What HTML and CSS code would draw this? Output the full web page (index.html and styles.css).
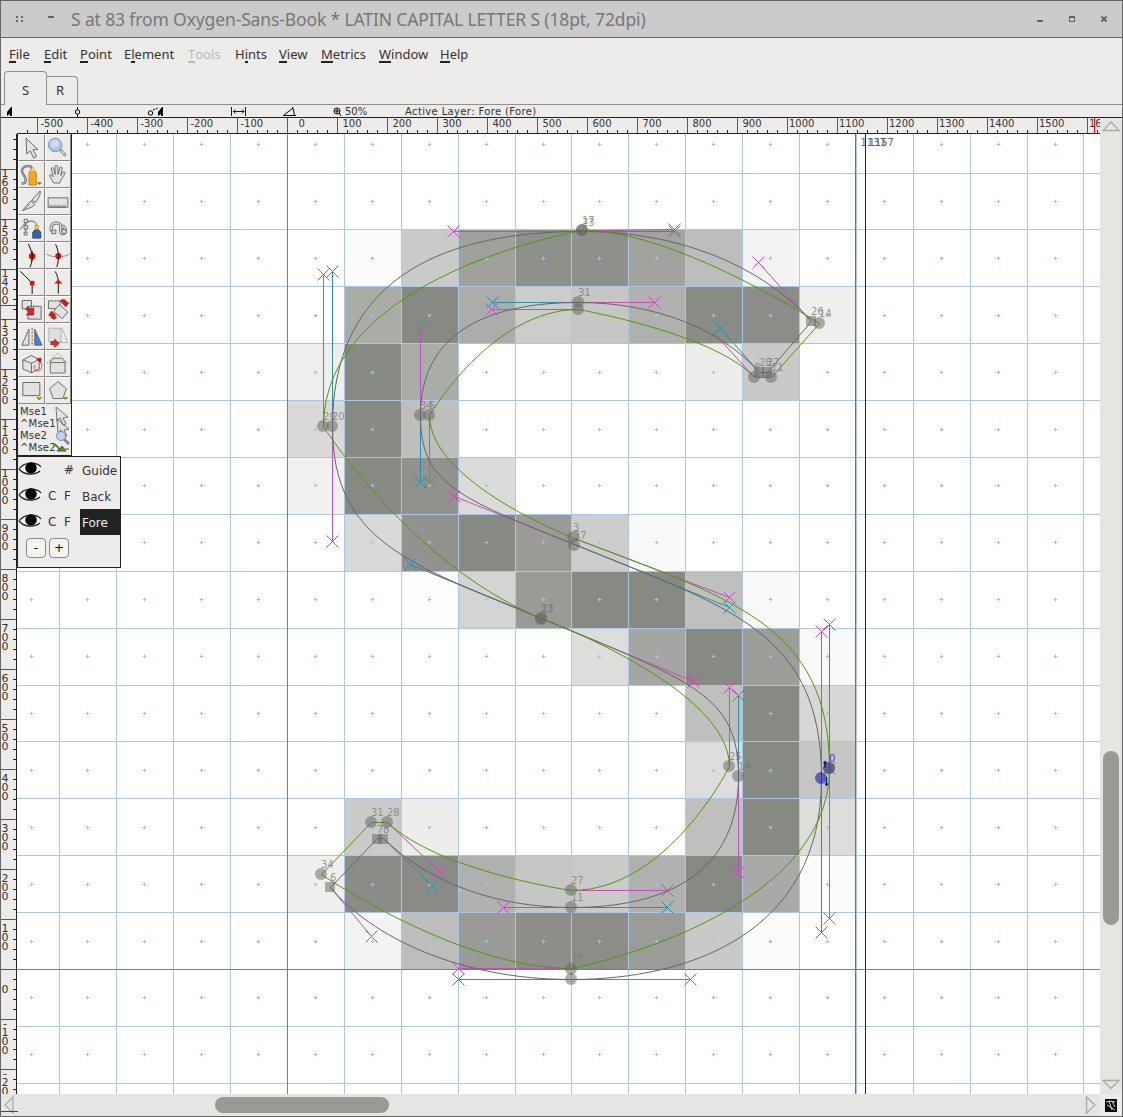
FILE: index.html
```html
<!DOCTYPE html>
<html lang="en">
<head>
<meta charset="utf-8">
<title>S at 83 from Oxygen-Sans-Book</title>
<link rel="stylesheet" href="styles.css">
</head>
<body>
<div class="window">
  <header class="titlebar">
    <svg class="wm-left" viewBox="0 0 60 36"><path d="M15 15h2v2h-2zM20 15h2v2h-2zM15 19h2v2h-2zM20 19h2v2h-2zM47 15h6v2h-6z"/></svg>
    <h1>S at 83 from Oxygen-Sans-Book * LATIN CAPITAL LETTER S (18pt, 72dpi)</h1>
    <svg class="wm-right" viewBox="1022 1 100 36"><path d="M1037 20h6v2h-6zM1069 16h6v6h-6zM1070 18v3h4v-3z" fill-rule="evenodd"/><path d="M1101.500 16.500l5 5M1106.500 16.500l-5 5" class="cross"/></svg>
  </header>
  <nav class="menubar">
    <span class="w35"><u>F</u>ile</span><span class="w36"><u>E</u>dit</span><span class="w44"><u>P</u>oint</span><span class="w64">E<u>l</u>ement</span><span class="w47 off"><u>T</u>ools</span><span class="w44">H<u>i</u>nts</span><span class="w42"><u>V</u>iew</span><span class="w58"><u>M</u>etrics</span><span class="w61"><u>W</u>indow</span><span><u>H</u>elp</span>
  </nav>
  <div class="tabs"><span class="tab active">S</span><span class="tab">R</span></div>
  <div class="infobar">
    <svg viewBox="1 105 343 12">
      <path d="M12 107v9h-2v-2l-3 2v-4l4-5z" fill="#000"/>
      <g fill="none" stroke="#000"><circle cx="77.500" cy="112" r="2.200"/><path d="M77.500 107v3M77.500 114v3"/><circle cx="150.500" cy="113" r="2.200"/><path d="M153 110l5-2" stroke-dasharray="2 1"/><path d="M231.500 107v9M245.500 107v9M233 111.500h11M235.500 109.500l-2 2 2 2M242 109.500l2 2-2 2" stroke-width=".9"/><path d="M283 115.500h13M284 115l9-7M292.500 107l1 3 1 6"/><circle cx="337" cy="111" r="3"/><path d="M335 111h4M337 109v4M339 113l2 3"/></g>
      <path d="M163 107v9h-2v-2l-3 2v-4l4-5z" fill="#000"/>
    </svg>
    <span class="zoomlevel">50%</span><span>Active Layer: Fore (Fore)</span>
  </div>
  <main class="work">
    <svg class="hruler" id="hruler" viewBox="1 118 1099 16"></svg>
    <svg class="vruler" id="vruler" viewBox="1 134 16 960"></svg>
    <section class="canvas">
      <svg class="glyph" viewBox="17 134 1083 960">
        <g id="cells"></g><g id="grid"></g>
        <g id="handles" class="handles"></g>
        <path class="back" d="M821.500 778.500C821.500 932.500 690.500 979.500 571.500 979.500C458.500 979.500 371.500 936.500 330.500 887.500L377.500 838.500L383.500 838.500C432.500 886.500 503.500 907.500 571.500 907.500C667.500 907.500 738.500 872.500 738.500 776.500C738.500 695.500 693.500 681.500 541.500 618.500C410.500 564.500 332.500 541.500 332.500 426.500C332.500 271.500 453.500 231.500 582.500 231.500C674.500 231.500 758.500 262.500 811.500 321.500L767.500 372.500L759.500 372.500C720.500 328.500 654.500 302.500 578.500 302.500C492.500 302.500 420.500 329.500 420.500 415.500C420.500 482.500 454.500 496.500 574.500 544.500C729.500 607.500 821.500 631.500 821.500 778.500Z"/>
        <path class="fore" d="M829.500 768.500C829.500 918.500 571.500 968.500 571.500 968.500C458.500 968.500 321.500 874.500 321.500 874.500L371.500 822.500L387.500 822.500C439.500 871.500 571.500 890.500 571.500 890.500C667.500 890.500 729.500 766.500 729.500 766.500C729.500 687.500 541.500 618.500 541.500 618.500C410.500 564.500 323.500 426.500 323.500 426.500C323.500 274.500 582.500 230.500 582.500 230.500C674.500 229.500 819.500 323.500 819.500 323.500L771.500 377.500L754.500 377.500C714.500 333.500 578.500 309.500 578.500 309.500C491.500 309.500 429.500 415.500 429.500 415.500C429.500 482.500 574.500 538.500 574.500 538.500C729.500 597.500 829.500 624.500 829.500 768.500Z"/>
        <g id="points" class="points"></g>
        <path d="M855.500 134V1094" stroke="#4e9a06"/><path d="M865.500 134V1094" stroke="#222"/>
        <path d="M825 761v7M823.500 763.500l1.500-2 1.500 2M826.500 777v9M825 783.500l1.500 2 1.500-2" stroke="#0000b4" fill="none" stroke-width="1.200"/>
        <text x="860.500" y="146" class="width">1137</text><text x="868.500" y="146" class="width">1157</text>
      </svg>
      <aside class="toolbox">
        <div class="tools">
          <svg viewBox="0 0 78 78"><path class="w" d="M22 10l37 35-15 1 11 21-9 5-11-22-11 9z"/></svg>
          <svg viewBox="0 0 78 78"><path d="M44 44l17 18" stroke="#888" stroke-width="10" stroke-linecap="round"/><path d="M49 50l12 12" stroke="#ddd" stroke-width="5"/><circle cx="30" cy="31" r="22" fill="#a5c7ec" stroke="#7b8faa" stroke-width="3"/><circle cx="28" cy="27" r="14" fill="#c7ddf5"/></svg>
          <svg viewBox="0 0 78 78"><path d="M8 66C24 70 25 54 13 38C3 22 16 12 28 13C42 11 42 22 36 30" fill="none" stroke="#555" stroke-width="7"/><path d="M8 66C24 70 25 54 13 38C3 22 16 12 28 13C42 11 42 22 36 30" fill="none" stroke="#ccc" stroke-width="3"/><path d="M31 72V34l11-18 12 18v38z" fill="#f8a51b" stroke="#a56400" stroke-width="2"/><path d="M35 28l7-12 7 12z" fill="#f3d7a0"/><path d="M55 63h17l-8 9z" fill="#4e9a06"/></svg>
          <svg viewBox="0 0 78 78"><path class="w" d="M24 66C19 56 13 48 12 41c4-4 8 1 11 5L17 19c5-4 8-1 9 4l4 16-1-27c4-5 9-3 9 2l1 24 6-22c5-4 9 0 7 5l-4 21 9-12c6-1 6 3 4 7L50 55l-6 12z"/></svg>
          <svg viewBox="0 0 78 78"><path class="w" d="M39 36L66 6c2 9-4 21-13 35zM36 38l14 10-11 9-28 10z"/><path d="M11 67l23-20" stroke="#777" stroke-width="2"/></svg>
          <svg viewBox="0 0 78 78"><path class="w" d="M7 27h64v31H7z"/><path d="M13 58v-9M18 58v-6M23 58v-6M28 58v-9M33 58v-6M38 58v-6M43 58v-9M48 58v-6M53 58v-6M58 58v-9M63 58v-6" stroke="#444" stroke-width="2"/></svg>
          <svg viewBox="0 0 78 78"><path d="M5 42C12 25 31 11 46 17C55 21 54 27 53 33M21 14v34" fill="none" stroke="#555" stroke-width="3"/><path class="w" d="M16 10h11v11H16zM16 30h11v11H16zM16 50h9v9h-9z"/><path d="M50 30h10v15H50z" fill="#ffd31c" stroke="#aa8500" stroke-width="2"/><path d="M43 69V50l7-6h11l7 6v19z" fill="#3465a4" stroke="#204a87" stroke-width="3"/></svg>
          <svg viewBox="0 0 78 78"><path d="M27 51C9 45 16 20 34 21C59 21 40 48 51 55C68 60 65 30 52 31" fill="none" stroke="#666" stroke-width="10"/><path d="M27 51C9 45 16 20 34 21C59 21 40 48 51 55C68 60 65 30 52 31" fill="none" stroke="#ddd" stroke-width="5"/><path class="w" d="M19 44h13v12H19zM52 42h13v13H52z"/></svg>
          <svg viewBox="0 0 78 78"><path d="M29 3C44 30 43 57 34 76" class="k"/><circle cx="41" cy="41" r="10" fill="red"/><path d="M41 25v32" class="k"/></svg>
          <svg viewBox="0 0 78 78"><path d="M2 34C16 47 61 46 76 34" class="k thin"/><circle cx="40" cy="41" r="10" fill="red"/><path d="M31 3C43 25 43 54 35 76" class="k"/></svg>
          <svg viewBox="0 0 78 78"><path d="M4 4l37 37v34" class="k"/><path d="M34 34h14v14H34z" fill="red"/></svg>
          <svg viewBox="0 0 78 78"><path d="M30 3C38 16 40 30 40 40v35" class="k"/><path d="M40 29l13 13H27z" fill="red"/></svg>
          <svg viewBox="0 0 78 78"><path class="w" d="M10 11h29v26H10zM28 29h41v40H28z"/><path d="M27 30l12 9 7-6v23H23l8-8-10-10z" fill="#cc3030" stroke="#8b0000" stroke-width="2"/></svg>
          <svg viewBox="0 0 78 78"><path class="w" d="M8 11h38v25H8z"/><path class="w" d="M43 23l28 24-18 22-28-24z"/><path d="M47 9c9-6 20-2 22 8h6L64 31 52 17h6c-2-3-6-2-9-1zM14 58H8l10-14 15 14h-7c1 4 5 5 9 5l-7 8c-7 0-13-5-14-13z" fill="#cc2020" stroke="#800" stroke-width="1.500"/></svg>
          <svg viewBox="0 0 78 78"><path class="w" d="M9 66L31 16v50z"/><path d="M41 12v57" stroke="#d36a16" stroke-width="4" stroke-dasharray="7 4"/><path d="M49 16v50h23z" fill="#4d82bd" stroke="#204a87" stroke-width="2"/></svg>
          <svg viewBox="0 0 78 78"><path d="M19 14h34l17 45H35z" fill="#eee" stroke="#aaa" stroke-width="3"/><path d="M9 12h40v44H9z" fill="#dfe0dd" stroke="#999" stroke-width="2"/><path d="M16 56h12v-8l15 14-15 12v-8H16z" fill="#e52a2a" stroke="#800" stroke-width="2"/></svg>
          <svg viewBox="0 0 78 78"><path class="w" d="M12 28l26-14 25 12v30L39 68 12 56zM12 28l27 10 24-12M39 38v30"/><path d="M52 60c12 8 22-4 18-20l-10-13M50 45c-4 6-2 12 2 16" fill="none" stroke="#c11" stroke-width="3" stroke-dasharray="4 2"/><path d="M53 24l17-3-2 17z" fill="#d01010"/></svg>
          <svg viewBox="0 0 78 78"><path class="w" d="M14 34l9-12h28l11 12v36H14zM14 36h48"/><path d="M3 38L38 5l35 33" fill="none" stroke="#57a80c" stroke-width="3" stroke-dasharray="4 4"/></svg>
          <svg viewBox="0 0 78 78"><path class="w" d="M12 14h53v41H12z"/><path d="M53 60h20l-10 10z" fill="#5aac0c"/></svg>
          <svg viewBox="0 0 78 78"><path class="w" d="M39 10l27 23-11 32H23L12 33z"/><path d="M53 60h20l-10 10z" fill="#5aac0c"/></svg>
        </div>
        <div class="mouse">
          <div>Mse1</div><div>^Mse1</div><div>Mse2</div><div>^Mse2</div>
          <svg viewBox="54 406 16 48"><path class="w s" d="M56 407l12 10-5 1 3 6-3 1-3-7-3 3zM57 419l12 10-5 1 3 6-3 1-3-7-3 3z"/><path d="M64 439l5 5" stroke="#888" stroke-width="3"/><circle cx="61" cy="436" r="4.500" fill="#b8d3f0" stroke="#7b8faa"/><path d="M53 444c4-1 5 4 8 7M57 451l5-5 4 5zM65 449h4" fill="#4e9a06" stroke="#555"/></svg>
        </div>
      </aside>
      <aside class="layers">
        <div class="layer"><svg viewBox="0 0 24 16"><use href="#eye"/></svg><span></span><span>#</span><b>Guide</b></div>
        <div class="layer"><svg viewBox="0 0 24 16"><use href="#eye"/></svg><span>C</span><span>F</span><b>Back</b></div>
        <div class="layer"><svg viewBox="0 0 24 16"><g id="eye"><path d="M1 8C6 1 18 0 23 7C18 14 7 15 1 8z" fill="#fff"/><path d="M1 8C6 1 18 0 23 6M1 8C7 15 17 14 22 10" fill="none" stroke="#222" stroke-width="1.200"/><circle cx="13" cy="7" r="5.800"/></g></svg><span>C</span><span>F</span><b class="sel">Fore</b></div>
        <div class="buttons"><button>-</button><button>+</button></div>
      </aside>
    </section>
    <div class="vscroll"><svg viewBox="0 0 22 16"><path d="M11 4l8 8.500H3z"/></svg><i></i><svg viewBox="0 0 22 16"><path d="M11 12.500L3 4.500h16z"/></svg></div>
    <div class="hscroll"><svg viewBox="0 0 14 22"><path d="M4 11l8-8v16z"/></svg><i></i><svg viewBox="0 0 14 22"><path d="M10 11L1.500 3v16z"/></svg></div>
    <svg class="corner" viewBox="0 0 22 22"><path d="M5 5h12v13H5z" fill="#000"/><path d="M6 8l4-1 5 1M9 7l3 9M7 11l8 5M12 7l3 6" stroke="#ddd" fill="none"/></svg>
    <i class="mark"></i>
  </main>
</div>
<script src="editor.js"></script>
</body>
</html>
```
FILE: styles.css
```css
* { box-sizing: border-box; }
body { margin: 0; font-family: "Noto Sans", "DejaVu Sans", sans-serif; color: #333; }
svg { display: block; }
.window { width: 1123px; height: 1117px; border: 1px solid #666; background: #edeceb; display: flex; flex-direction: column; overflow: hidden; }
.titlebar { height: 37px; flex: none; background: #cbcbcb; border-bottom: 1px solid #666; display: flex; align-items: center; color: #777; }
.titlebar h1 { margin: 0 0 0 10px; flex: 1; font-size: 17.5px; font-weight: 400; line-height: 36px; white-space: nowrap; letter-spacing: -0.13px; }
.wm-left { width: 60px; height: 36px; fill: #666; }
.wm-right { width: 100px; height: 36px; fill: #666; }
.cross { stroke: #666; stroke-width: 2.2; }
.menubar { height: 33px; flex: none; display: flex; padding: 7px 0 0 8px; font-size: 13px; line-height: 19px; }
.menubar span { white-space: nowrap; }
.menubar u { text-decoration: none; display: inline-block; height: 18px; border-bottom: 2px solid #222; }
.menubar .off { color: #b8b8b5; }
.menubar .off u { border-color: #b8b8b5; }
.w35 { width: 35px; } .w36 { width: 36px; } .w42 { width: 42px; } .w44 { width: 44px; } .w47 { width: 47px; } .w58 { width: 58px; } .w61 { width: 61px; } .w64 { width: 64px; }
.tabs { height: 34px; flex: none; display: flex; align-items: flex-end; padding-left: 3px; border-bottom: 1px solid #91918c; }
.tab { height: 28px; width: 31px; border: 1px solid #91918c; border-left: 0; border-bottom: 0; border-radius: 0 4px 0 0; font-size: 13px; line-height: 27px; text-align: center; padding-right: 4px; }
.tab.active { height: 34px; width: 43px; border-left: 1px solid #91918c; border-radius: 4px 4px 0 0; line-height: 37px; padding: 0; margin-bottom: -1px; background: #edeceb; }
.infobar { height: 13px; flex: none; border-bottom: 1px solid #222; display: flex; font: 10px/13px "DejaVu Sans", sans-serif; white-space: nowrap; letter-spacing: .36px; }
.infobar svg { width: 343px; height: 12px; flex: none; }
.zoomlevel { width: 60px; padding-left: 1px; letter-spacing: 0; }
.infobar span + span { padding-left: 1px; }
.work { flex: 1; position: relative; display: grid; grid-template: 16px 960px 22px / 16px 1083px 22px; }
.hruler { grid-area: 1 / 1 / 2 / 3; width: 1099px; height: 16px; }
.vruler { grid-area: 2 / 1; width: 16px; height: 960px; }
.hruler text, .vruler text { font: 10px "DejaVu Sans", sans-serif; fill: #333; }
.vruler text { font-size: 11px; text-anchor: middle; }
.canvas { grid-area: 2 / 2; position: relative; background: #fff; }
.glyph { width: 1083px; height: 960px; }
.back { fill: none; stroke: #666; }
.fore { fill: none; stroke: #4e9a06; }
.handles path { fill: none; }
.points circle, .points rect { fill: #666; fill-opacity: .52; }
.points .now { fill: #0000b4; }
.points text { font: 10px "DejaVu Sans", sans-serif; fill: #777; fill-opacity: .75; }
.width { font: 10px "DejaVu Sans", sans-serif; fill: #666; }
.toolbox { position: absolute; left: 0; top: 0; width: 55px; height: 322px; border: 1px solid #222; border-top-width: 0; background: #edeceb; }
.tools { display: grid; grid-template-columns: 27px 26px; grid-auto-rows: 27px; }
.tools svg { width: 100%; height: 27px; background: #edeceb; border-right: 1px solid #888; border-bottom: 1px solid #888; border-top: 1px solid #fff; border-left: 1px solid #fff; }
.w { fill: #e2e3e0; stroke: #666; stroke-width: 3; }
.w.s { stroke-width: .9; }
.k { fill: none; stroke: #000; stroke-width: 3; }
.k.thin { stroke: #555; stroke-width: 2; }
.mouse { position: relative; padding: 2px 0 0 2px; font: 10px/12px "DejaVu Sans", sans-serif; letter-spacing: .2px; }
.mouse svg { position: absolute; left: 36px; top: 2px; width: 16px; height: 48px; }
.layers { position: absolute; left: 0; top: 322px; width: 104px; height: 112px; border: 1px solid #222; background: #edeceb; }
.layer { height: 26px; display: grid; grid-template-columns: 30px 16px 16px 40px; align-items: center; font: 12px/26px "DejaVu Sans", sans-serif; }
.layer svg { width: 24px; height: 16px; margin-top: -2px; }
.layer span { padding-top: 1px; line-height: 25px; }
.layer span + span { padding-left: 0; }
.layer b { font-weight: 400; padding: 1px 0 0 2px; height: 26px; line-height: 26px; }
.layer .sel { background: #212224; color: #eee; }
.buttons { display: flex; gap: 3px; padding: 3px 0 0 8px; }
.buttons button { width: 20px; height: 20px; padding: 0; border: 1px solid #888; border-radius: 4px; background: #f5f5f4; font: 12px/16px "DejaVu Sans", sans-serif; }
.vscroll { grid-area: 1 / 3 / 3 / 4; background: #e5e5e1; display: flex; flex-direction: column; align-items: center; }
.vscroll i { width: 16px; height: 174px; border-radius: 8px; background: #9a9a94; margin: 617px 0 151px -1px; }
.vscroll svg { width: 22px; height: 16px; flex: none; }
.hscroll { grid-area: 3 / 1 / 4 / 3; background: #e5e5e1; display: flex; align-items: center; }
.hscroll i { width: 174px; height: 16px; border-radius: 8px; background: #9a9a94; margin: 0 696px 0 200px; }
.hscroll svg { width: 14px; height: 22px; flex: none; }
.vscroll path, .hscroll path { fill: none; stroke: #aaa; stroke-width: 1.3; }
.corner { grid-area: 3 / 3; width: 22px; height: 22px; }
.mark { position: absolute; left: 0; bottom: 4px; width: 17px; height: 1px; background: #e00; }
```
FILE: editor.js
```js
const put = (id, html) => { document.getElementById(id).innerHTML = html; };
const line = (d, color) => `<path d="${d}" stroke="${color}" fill="none"/>`;

// Rulers: 50 px for each 100 font units.
let h = '', v = '';
for (let n = -26; n <= 81; n++) {
  const x = 287.5 + n * 10;
  h += n % 5 ? line(`M${x} 130V133`, '#222') : line(`M${x} 118V133`, '#3c7a08');
  if (n % 5 === 0) {
    const value = n * 20;
    h += `<text x="${value ? x + (value > 900 ? 1.5 : value < 0 ? 3 : 5) : x + 11}" y="127">${value}</text>`;
  }
}
h += line('M17 133.500H1100', '#222') + line('M1094.500 118V134', '#f00');
put('hruler', h);

for (let n = -12; n <= 83; n++) {
  const y = 969.5 - n * 10;
  v += n % 5 ? line(`M13 ${y}H16`, '#222') : line(`M1 ${y}H16`, '#3c7a08');
}
for (let value = -200; value <= 1600; value += 100) {
  const top = 969 - value / 2;
  const first = value === 0 ? 20 : value < 0 || value >= 1000 ? 4 : 9;
  [...String(value)].forEach((ch, i) => { v += `<text x="5" y="${top + first + 4 + i * 9}">${ch}</text>`; });
}
v += line('M16.500 134V1094', '#222') + line('M1 305.500H16', '#f00');
put('vruler', v);

// Anti-aliased preview, one shade for each pixel of the 18pt rendering.
const step = 56.89, gx = k => Math.round(287 + k * step), gy = k => Math.round(969 - k * step);
const rows = [
  'fff fcfcfc cacac8 a0a09c 8e908b 8e908b a2a39f bdbdbb f3f3f3 fff',
  'fff aaaca7 878983 acacaa cccccb c6c6c4 b0b1ae 8a8c86 8c8d89 efefed',
  'eee 878983 aaaca7 fff fff fff fff ededeb c9c9c7 fff',
  'd9d9d8 878983 bebebc fff fff fff fff fff fff fff',
  'f0f0ee 878983 91928e dbdbd9 fff fff fff fff fff fff',
  'fff d9d9d7 92938f 878983 9a9b97 cdcdcb f9f9f9 fff fff fff',
  'fff fff fdfdfd d4d4d2 9a9b97 878983 878983 bfbfbd f9f9f9 fff',
  'fff fff fff fff fff dddddb a5a6a3 878983 9b9d98 f9f9f9',
  'fff fff fff fff fff fff fff bfbfbd 878983 d7d7d5',
  'fff fff fff fff fff fff fff dddddd 878983 c6c6c4',
  'fff cacac8 ededeb fff fff fff fff bfbfbd 878983 dddddb',
  'efefed 8b8c88 8a8b87 b0b1ae c6c6c4 cacac8 b0b1ae 878983 a9a9a7 fcfcfc',
  'fff f3f3f3 bdbdbb 9a9b97 8d8e8a 8c8d89 9b9c98 c9c9c7 fbfbfb fff'
];
put('cells', rows.map((row, r) => row.split(' ').map((c, i) =>
  c === 'fff' ? '' : `<rect x="${gx(i)}" y="${gy(13 - r)}" width="${gx(i + 1) - gx(i)}" height="${gy(12 - r) - gy(13 - r)}" fill="#${c}"/>`).join('')).join(''));

let g = '';
for (let k = -4; k <= 14; k++) g += line(`M${gx(k) + .5} 134V1094`, '#afc5e6');
for (let k = -2; k <= 14; k++) g += line(`M17 ${gy(k) + .5}H1100`, '#afc5e6');
for (let i = -5; i <= 13; i++) for (let j = -2; j <= 14; j++) {
  const x = Math.floor(287.05 + (i + .5) * step), y = Math.round(969 - (j + .5) * step);
  g += line(`M${x - 2} ${y + .5}h5M${x + .5} ${y - 2}v5`, '#afc5e666') + line(`M${x - 1} ${y + .5}h3M${x + .5} ${y - 1}v3`, '#a5c0e8');
}
g += line('M287.500 134V1094M17 969.500H1100', '#7d7d79');
put('grid', g);

// Control handles: anchor, then handle end.
const pink = '#c050b4', teal = '#2e8ea6';
const handles = [
  [829,768,829,918,pink],[571,968,458,968,pink],[387,822,439,871,pink],[571,890,667,890,pink],[729,766,729,687,pink],
  [541,618,410,564,pink],[323,426,323,274,pink],[582,230,674,229,pink],[754,377,714,333,pink],[578,309,491,309,pink],
  [429,415,429,482,pink],[574,538,729,597,pink],[829,768,829,624,teal],[829,768,829,768,pink],
  [571,979,690,979,pink],[571,979,458,979,teal],[821,778,821,631,pink],[821,778,821,932,teal],[330,887,371,936,pink],
  [383,838,432,886,teal],[571,907,503,907,pink],[571,907,667,907,teal],[738,776,738,872,pink],[738,776,738,695,teal],
  [541,618,693,681,pink],[541,618,410,564,teal],[332,426,332,541,pink],[332,426,332,271,teal],[582,231,453,231,pink],
  [582,231,674,231,teal],[811,321,758,262,pink],[759,372,720,328,teal],[578,302,654,302,pink],[578,302,492,302,teal],
  [420,415,420,329,pink],[420,415,420,482,teal],[574,544,454,496,pink],[574,544,729,607,teal]
];
put('handles', handles.map(([a, b, c, d, color]) =>
  line(`M${a + .5} ${b + .5}L${c + .5} ${d + .5}M${c - 5.5} ${d - 5.5}l12 12m0 -12l-12 12`, color)).join(''));

// Anchor points: x, y, label, kind.
const points = [
  [582,230,'17'],[582,230,'',''],[578,302,'31'],[578,309,''],[819,323,'14'],[811,321,'26','r'],[759,372,'28','r'],[767,372,'27','r'],
  [754,377,'8'],[771,377,'11'],[323,426,'20'],[332,426,'20'],[420,415,'34'],[429,415,'5'],[573,537,'3'],[574,545,'37'],
  [541,618,'23'],[541,619,'17'],[729,766,'25'],[738,776,'14'],[829,768,'0','now'],[829,768,''],[821,778,'','now'],
  [371,822,'31'],[387,822,'28'],[377,839,'7','r'],[383,839,'8','r'],[321,874,'34'],[330,887,'6','r'],
  [571,890,'27'],[571,907,'11'],[571,969,'37'],[571,979,'']
];
put('points', points.map(([x, y, label, kind]) =>
  (kind === 'r' ? `<rect x="${x - 5}" y="${y - 5}" width="10" height="10"/>` : `<circle cx="${x}" cy="${y}" r="6" class="${kind || ''}"/>`) +
  `<text x="${x}" y="${y - 6}" class="${kind || ''}">${label}</text>`).join('') + '<text x="582" y="226">23</text>');
```
